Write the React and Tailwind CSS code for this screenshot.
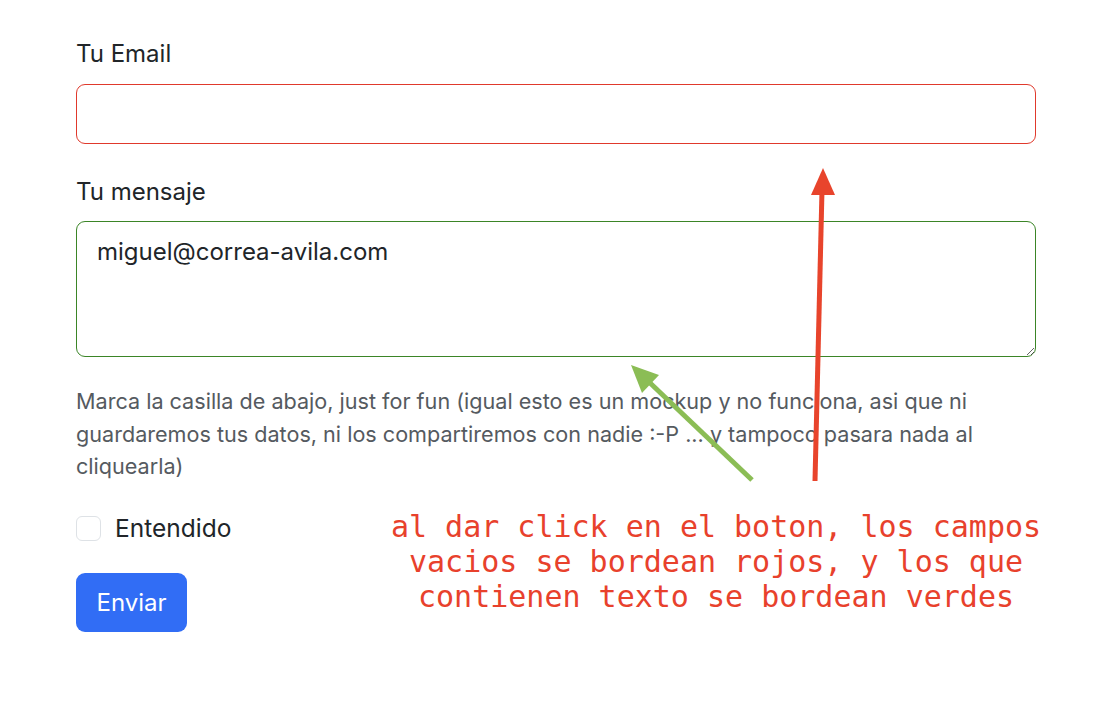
import React from "react";

export default function App() {
  return (
    <div className="relative w-[1112px] h-[704px] bg-white overflow-hidden" style={{ fontFamily: "Inter, 'Noto Sans', sans-serif" }}>
      <div className="pt-[35px] pl-[76px] w-[1036px]">
        <label className="block text-[24px] leading-[37px] text-[#212529] mb-[12px]">Tu Email</label>
        <div className="h-[60px] rounded-[9px] border border-[#e0392c] bg-white"></div>
        <label className="block mt-[29px] text-[24px] leading-[37px] text-[#212529] mb-[11px]">Tu mensaje</label>
        <textarea
          readOnly
          defaultValue="miguel@correa-avila.com"
          className="block w-full h-[136px] rounded-[9px] border border-[#3b8527] px-[20px] py-[11px] text-[24px] leading-[37px] text-[#212529] outline-none resize-y"
        />
        <p className="mt-[28px] text-[21.6px] leading-[32.5px] text-[#555a60]">
          Marca la casilla de abajo, just for fun (igual esto es un mockup y no funciona, asi que ni guardaremos tus datos, ni los compartiremos con nadie :-P ... y tampoco pasara nada al cliquearla)
        </p>
        <div className="mt-[26px] flex items-center gap-[14px] h-[40px]">
          <div className="w-[25px] h-[25px] rounded-[6px] border border-[#dee2e6] bg-white"></div>
          <span className="text-[24.5px] leading-[37px] text-[#212529]">Entendido</span>
        </div>
        <button className="mt-[24px] w-[111px] h-[59px] rounded-[9px] bg-[#316df5] text-white text-[24px] leading-[37px]">Enviar</button>
      </div>

      <div
        className="absolute left-[380px] top-[509px] w-[672px] text-center text-[30px] leading-[35px] text-[#e8412c]"
        style={{ fontFamily: "'DejaVu Sans Mono', monospace" }}
      >
        al dar click en el boton, los campos<br />vacios se bordean rojos, y los que<br />contienen texto se bordean verdes
      </div>

      <svg className="absolute left-0 top-0 pointer-events-none" width="1112" height="704" viewBox="0 0 1112 704">
        <line x1="815" y1="481" x2="822" y2="190" stroke="#e8442c" strokeWidth="5" strokeLinecap="butt" />
        <polygon points="823,168 811,195 835,195" fill="#e8442c" />
        <line x1="752" y1="480" x2="648" y2="381" stroke="#8bbd55" strokeWidth="5" />
        <polygon points="631,365 659,375 642,393" fill="#8bbd55" />
      </svg>
    </div>
  );
}
